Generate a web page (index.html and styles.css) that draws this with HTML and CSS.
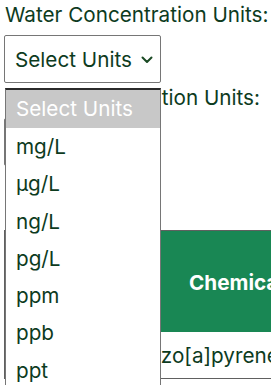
FILE: index.html
```html
<!DOCTYPE html>
<html lang="en">
<head>
<meta charset="utf-8">
<title>Concentration Units</title>
<link rel="stylesheet" href="styles.css">
</head>
<body>
<div class="page">
  <div class="field">
    <label class="field-label" for="water-units">Water Concentration Units:</label>
    <div class="select-wrap">
      <select id="water-units" class="unit-select">
        <option>Select Units</option>
        <option>mg/L</option>
      </select>
      <svg class="chevron" width="12" height="8" viewBox="0 0 12 8"><path d="M1.5 1.5 L6 6 L10.5 1.5" fill="none" stroke="currentColor" stroke-width="2" stroke-linecap="round" stroke-linejoin="round"/></svg>
    </div>
    <ul class="dropdown" role="listbox">
      <li class="opt is-active">Select Units</li>
      <li class="opt">mg/L</li>
      <li class="opt">µg/L</li>
      <li class="opt">ng/L</li>
      <li class="opt">pg/L</li>
      <li class="opt">ppm</li>
      <li class="opt">ppb</li>
      <li class="opt">ppt</li>
      <li class="opt">ppq</li>
    </ul>
  </div>
  <div class="field">
    <label class="field-label" for="food-units">Food Concentration Units:</label>
    <div class="select-wrap">
      <select id="food-units" class="unit-select">
        <option>Select Units</option>
      </select>
    </div>
  </div>
  <div class="table-wrap">
    <table class="results">
      <thead>
        <tr>
          <th class="col-a">Select</th>
          <th class="col-b">Chemical</th>
          <th class="col-c">Water Concentration</th>
        </tr>
      </thead>
      <tbody>
        <tr>
          <td class="col-a"></td>
          <td class="col-b">Benzo[a]pyrene</td>
          <td class="col-c"></td>
        </tr>
      </tbody>
    </table>
  </div>
</div>
</body>
</html>
```
FILE: styles.css
```css
html, body {
  margin: 0;
  padding: 0;
  background: #ffffff;
  overflow: hidden;
}
body {
  font-family: Inter, "Noto Sans", sans-serif;
  color: #0d3b1e;
  font-size: 20.7px;
}
.page {
  width: 271px;
  height: 385px;
  overflow: hidden;
  position: relative;
  padding-left: 4px;
  box-sizing: border-box;
}
.field {
  display: flex;
  flex-direction: column;
  align-items: flex-start;
}
.field-label {
  display: block;
  padding-left: 1px;
  padding-top: 3px;
  line-height: 24px;
  white-space: nowrap;
}
.select-wrap {
  position: relative;
  margin-top: 8px;
}
.unit-select {
  appearance: none;
  -webkit-appearance: none;
  width: 157px;
  height: 48px;
  border: 1px solid #767676;
  border-radius: 2px;
  background: #ffffff;
  color: #0d3b1e;
  font-family: Inter, "Noto Sans", sans-serif;
  font-size: 20.7px;
  padding: 0 10px;
  margin: 0;
}
.chevron {
  position: absolute;
  right: 8px;
  top: 21px;
  color: #1a4a24;
  pointer-events: none;
}
.dropdown {
  position: absolute;
  left: 5px;
  top: 88px;
  width: 156px;
  margin: 0;
  padding: 0;
  list-style: none;
  background: #ffffff;
  border: 1px solid #767676;
  border-top: 2px solid #2a2a2a;
  box-sizing: border-box;
  z-index: 10;
}
.opt {
  height: 37.3px;
  line-height: 37px;
  padding-left: 10px;
  color: #0d3b1e;
}
.opt.is-active {
  background: #c8c8c8;
  color: #ffffff;
  height: 38px;
  line-height: 38px;
}
.table-wrap {
  margin-top: 64px;
  width: 600px;
}
.results {
  border-collapse: collapse;
  border: 1px solid #606060;
  table-layout: fixed;
  width: 580px;
}
.results th {
  background: #198754;
  color: #ffffff;
  font-weight: 700;
  height: 100px;
  padding: 1px 8px 0;
  text-align: center;
}
.results td {
  height: 46px;
  padding: 0 8px;
  text-align: left;
}
.col-a { width: 94px; }
.col-b { width: 227px; }
.col-c { width: 227px; }
```
